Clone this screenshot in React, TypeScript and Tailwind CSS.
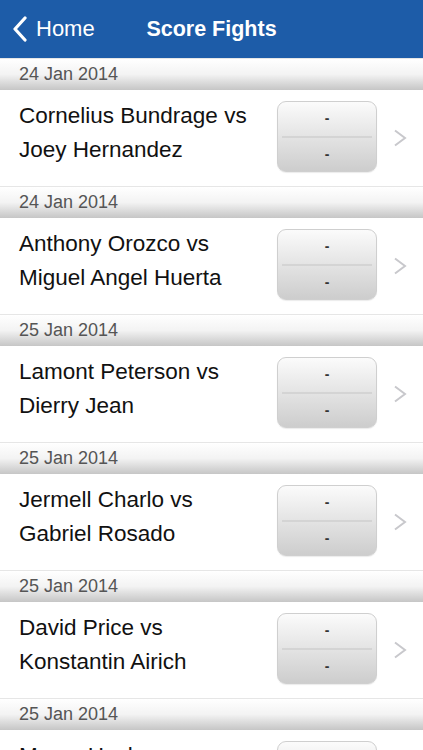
import React from 'react';

type Fight = { date: string; a: string; b: string };

const fights: Fight[] = [
  { date: '24 Jan 2014', a: 'Cornelius Bundrage vs', b: 'Joey Hernandez' },
  { date: '24 Jan 2014', a: 'Anthony Orozco vs', b: 'Miguel Angel Huerta' },
  { date: '25 Jan 2014', a: 'Lamont Peterson vs', b: 'Dierry Jean' },
  { date: '25 Jan 2014', a: 'Jermell Charlo vs', b: 'Gabriel Rosado' },
  { date: '25 Jan 2014', a: 'David Price vs', b: 'Konstantin Airich' },
  { date: '25 Jan 2014', a: 'Marco Huck vs', b: 'Firat Arslan' },
];

const font = { fontFamily: '"Liberation Sans", Arial, sans-serif' };

const ScoreBox: React.FC = () => (
  <div className="w-[100px] h-[71px] mb-[3px] rounded-[9px] border border-[#cfcfcf] bg-gradient-to-b from-[#fbfbfb] to-[#cdcdcd] flex flex-col shadow-[0_1px_1px_rgba(0,0,0,0.08)]">
    <div className="flex-1 flex items-center justify-center text-[14px] font-bold text-[#333]">-</div>
    <div className="mx-[4px] h-[2px] bg-[#d4d4d4]" />
    <div className="flex-1 flex items-center justify-center text-[14px] font-bold text-[#333]">-</div>
  </div>
);

const App: React.FC = () => {
  return (
    <div className="w-[423px] h-[750px] overflow-hidden bg-white" style={font}>
      <div className="h-[58px] bg-[#1d5ca8] flex items-center relative">
        <div className="flex items-center pl-[12px] text-white">
          <svg width="16" height="26" viewBox="0 0 16 26" fill="none">
            <path d="M13 2 L3 13 L13 24" stroke="white" strokeWidth="3.2" strokeLinecap="round" strokeLinejoin="round" />
          </svg>
          <span className="ml-[8px] text-[22px] leading-none">Home</span>
        </div>
        <div className="absolute left-0 right-0 text-center text-white text-[21.5px] font-bold pointer-events-none">
          Score Fights
        </div>
      </div>

      {fights.map((f, i) => (
        <div key={i}>
          <div className="h-[32px] border-t border-[#e6e6e6] bg-gradient-to-b from-white via-[#f3f3f3] to-[#c6c6c6] flex items-center pl-[19px] text-[18px] text-[#555]">
            {f.date}
          </div>
          <div className="h-[96px] flex items-center">
            <div className="flex-1 pl-[19px] pb-[10px] text-[22.5px] leading-[34px] text-[#111] whitespace-nowrap">
              <div>{f.a}</div>
              <div>{f.b}</div>
            </div>
            <ScoreBox />
            <div className="w-[46px] flex justify-center">
              <svg width="14" height="18" viewBox="0 0 14 18" fill="none">
                <path d="M2 1.5 L12 9 L2 16.5" stroke="#c8c8cc" strokeWidth="2" strokeLinejoin="miter" />
              </svg>
            </div>
          </div>
        </div>
      ))}
    </div>
  );
};

export default App;
